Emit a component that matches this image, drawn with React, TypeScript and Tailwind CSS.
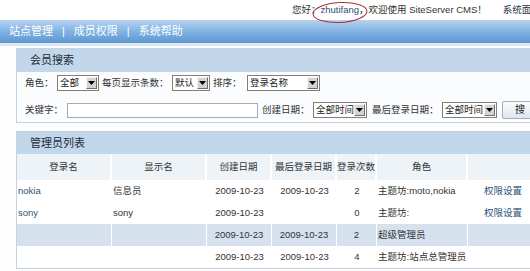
import React from "react";

function Sel({ w, text }: { w: number; text: string }) {
  return (
    <div
      className="h-[16px] border border-[#7f7f7f] bg-white flex items-center justify-between shrink-0"
      style={{ width: w }}
    >
      <span className="pl-[2px] text-[9.5px] leading-none text-[#222] whitespace-nowrap">{text}</span>
      <span className="w-[11px] h-[12px] mr-[1px] bg-[#d6d3ce] border-t border-l border-t-[#f4f4f4] border-l-[#f4f4f4] border-r border-b border-r-[#6f6f6f] border-b-[#6f6f6f] flex items-center justify-center">
        <svg width="7" height="4" viewBox="0 0 7 4">
          <path d="M0 0 L7 0 L3.5 4 Z" fill="#000" />
        </svg>
      </span>
    </div>
  );
}

const cols = [95, 95, 65, 65, 40, 91, 70];

type Cell = { t?: string; link?: boolean; align?: "l" | "c" };

const rows: { bg?: boolean; cells: Cell[] }[] = [
  {
    cells: [
      { t: "nokia", link: true, align: "l" },
      { t: "信息员", align: "l" },
      { t: "2009-10-23", align: "c" },
      { t: "2009-10-23", align: "c" },
      { t: "2", align: "c" },
      { t: "主题坊:moto,nokia", align: "l" },
      { t: "权限设置", link: true, align: "c" },
    ],
  },
  {
    cells: [
      { t: "sony", link: true, align: "l" },
      { t: "sony", align: "l" },
      { t: "2009-10-23", align: "c" },
      {},
      { t: "0", align: "c" },
      { t: "主题坊:", align: "l" },
      { t: "权限设置", link: true, align: "c" },
    ],
  },
  {
    bg: true,
    cells: [
      {},
      {},
      { t: "2009-10-23", align: "c" },
      { t: "2009-10-23", align: "c" },
      { t: "2", align: "c" },
      { t: "超级管理员", align: "l" },
      {},
    ],
  },
  {
    cells: [
      {},
      {},
      { t: "2009-10-23", align: "c" },
      { t: "2009-10-23", align: "c" },
      { t: "4", align: "c" },
      { t: "主题坊:站点总管理员", align: "l" },
      {},
    ],
  },
];

const heads = ["登录名", "显示名", "创建日期", "最后登录日期", "登录次数", "角色", ""];

export default function App() {
  return (
    <div className="w-[530px] h-[271px] overflow-hidden bg-[#fdfdfe] relative font-['Liberation_Sans','Noto_Sans_CJK_SC',sans-serif] text-[#333]">
      {/* top bar */}
      <div className="h-[20px] bg-white flex items-center pl-[292px] whitespace-nowrap text-[9.5px] leading-none text-[#333]">
        <span>您好：</span>
        <span className="text-[#2d4f73]">zhutifang</span>
        <span>，欢迎使用 SiteServer CMS！</span>
        <span className="ml-[16px] text-[#1c2f48]">系统面板</span>
      </div>
      <svg className="absolute left-[310px] top-0" width="60" height="25" viewBox="0 0 60 25">
        <ellipse cx="30" cy="12.5" rx="27" ry="10" fill="none" stroke="#a83232" strokeWidth="1" transform="rotate(-3 30 12.5)" />
      </svg>

      {/* nav */}
      <div className="h-[23px] bg-gradient-to-b from-[#b7d3ef] via-[#80b2e2] to-[#5d97d2] flex items-center pl-[9px] text-white text-[11px] leading-none whitespace-nowrap">
        <span>站点管理</span>
        <span className="mx-[9px]">|</span>
        <span>成员权限</span>
        <span className="mx-[9px]">|</span>
        <span>系统帮助</span>
      </div>
      <div className="h-[3px] bg-[#dde8f3]" />

      <div className="pl-[16px] pt-[2px]">
        {/* search panel */}
        <div className="w-[540px] border border-[#c3d3e3]">
          <div className="h-[23px] bg-[#c3d7ea] flex items-center pl-[13px] text-[11px] leading-none text-[#1d2b3a]">
            会员搜索
          </div>
          <div className="bg-[#fbfcfe] pt-[3px] pb-[4px] pl-[8px] text-[9.5px] leading-none">
            <div className="h-[16px] flex items-center whitespace-nowrap">
              <span className="w-[32px] shrink-0">角色：</span>
              <Sel w={42} text="全部" />
              <span className="ml-[3px] w-[70px] shrink-0">每页显示条数：</span>
              <Sel w={38} text="默认" />
              <span className="ml-[3px] w-[34px] shrink-0">排序：</span>
              <Sel w={73} text="登录名称" />
            </div>
            <div className="h-[16px] mt-[11px] flex items-center whitespace-nowrap">
              <span className="w-[42px] shrink-0">关键字：</span>
              <div className="w-[191px] h-[15px] border border-[#a5acb2] bg-white shrink-0" />
              <span className="ml-[4px] w-[51px] shrink-0">创建日期：</span>
              <Sel w={54} text="全部时间" />
              <span className="ml-[5px] w-[70px] shrink-0">最后登录日期：</span>
              <Sel w={55} text="全部时间" />
              <div className="ml-[5px] w-[52px] h-[18px] shrink-0 border border-[#9fb0c2] rounded-[2px] bg-gradient-to-b from-[#fbfcfd] to-[#dfe6ee] flex items-center pl-[12px] text-[10px] text-[#222]">
                搜&nbsp;&nbsp;索
              </div>
            </div>
          </div>
        </div>

        {/* list panel */}
        <div className="mt-[8px] w-[540px] border border-[#c3d3e3] bg-white">
          <div className="h-[22px] bg-[#c3d7ea] flex items-center pl-[13px] text-[11px] leading-none text-[#1d2b3a]">
            管理员列表
          </div>
          <div className="flex h-[26px] text-[9.5px] leading-none">
            {heads.map((h, i) => (
              <div
                key={i}
                className="bg-[#eef3f8] border-r-2 border-white flex items-center justify-center text-[#333] shrink-0"
                style={{ width: cols[i] }}
              >
                {h}
              </div>
            ))}
          </div>
          {rows.map((r, ri) => (
            <div key={ri} className={`flex h-[22px] text-[9.5px] leading-none ${r.bg ? "bg-[#d5e2ee]" : "bg-white"}`}>
              {r.cells.map((c, ci) => (
                <div
                  key={ci}
                  className={`shrink-0 flex items-center whitespace-nowrap ${r.bg ? "border-r border-white" : ""} ${
                    c.align === "c" ? "justify-center" : "justify-start pl-[1px]"
                  } ${c.link ? "text-[#2e5478]" : "text-[#333]"}`}
                  style={{ width: cols[ci] }}
                >
                  {c.t ?? ""}
                </div>
              ))}
            </div>
          ))}
        </div>
      </div>
    </div>
  );
}
